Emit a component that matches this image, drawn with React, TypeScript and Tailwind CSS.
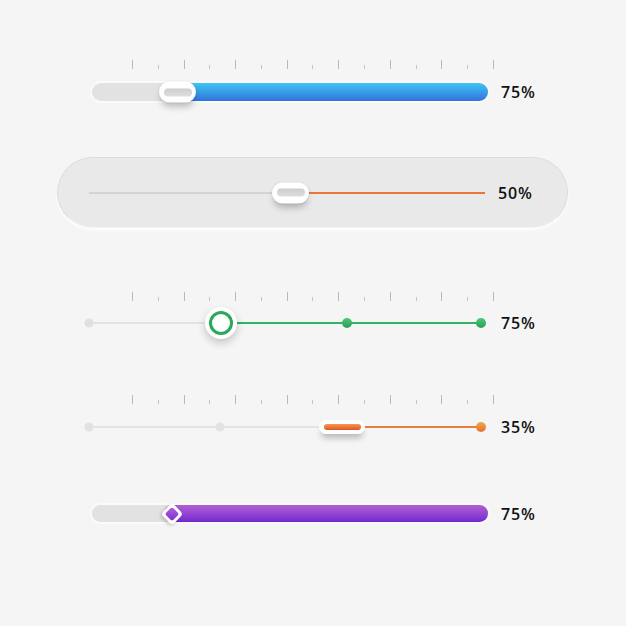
const TICKS = Array.from({ length: 15 }, (_, i) => i % 2 === 0);

function Ticks() {
  return (
    <div className="ml-[132px] flex h-[9px] w-[362px] items-end justify-between">
      {TICKS.map((long, i) => (
        <span
          key={i}
          className={long ? "h-[9px] w-px bg-[#b9b9b9]" : "h-[4px] w-px bg-[#c4c4c4]"}
        />
      ))}
    </div>
  );
}

function Label({ children }: { children: React.ReactNode }) {
  return (
    <span className="font-['Open_Sans',sans-serif] text-[16px] font-semibold leading-none tracking-[0.05em] text-[#111111]">
      {children}
    </span>
  );
}

function PillThumb({ left }: { left: number }) {
  return (
    <div
      className="absolute top-1/2 flex h-[21px] w-[37px] -translate-y-1/2 items-center justify-center rounded-full bg-white shadow-[0_6px_7px_-2px_rgba(0,0,0,0.25),0_0_0_1px_rgba(0,0,0,0.04)]"
      style={{ left }}
    >
      <span className="h-[8px] w-[28px] rounded-full bg-gradient-to-b from-[#cdcdcd] to-[#dedede]" />
    </div>
  );
}

export default function App() {
  return (
    <div className="flex h-[626px] w-[626px] flex-col bg-[#f5f5f5] pt-[60px]">
      {/* blue bar */}
      <Ticks />
      <div className="mt-[14px] flex h-[18px] items-center">
        <div className="relative ml-[92px] h-[18px] w-[396px] rounded-full bg-[#e2e2e2] shadow-[0_0_0_2px_#fafafa]">
          <div className="absolute inset-y-0 left-[90px] right-0 rounded-full bg-gradient-to-b from-[#3fc6f1] to-[#3472dc]" />
          <PillThumb left={67} />
        </div>
        <span className="ml-[13px]">
          <Label>75%</Label>
        </span>
      </div>

      {/* orange line in pill */}
      <div className="ml-[57px] mt-[56px] flex h-[71px] w-[511px] items-center rounded-full border border-[#dcdcdc] border-b-[#f2f2f2] bg-[#e9e9e9] shadow-[0_2px_3px_rgba(255,255,255,0.9)]">
        <div className="relative ml-[31px] h-[2px] w-[396px] bg-[#d3d3d3]">
          <div className="absolute inset-y-0 left-[200px] right-0 bg-[#e8763a]" />
          <PillThumb left={183} />
        </div>
        <span className="ml-[13px]">
          <Label>50%</Label>
        </span>
      </div>

      {/* green stepped */}
      <div className="mt-[64px]">
        <Ticks />
      </div>
      <div className="mt-[6px] flex h-[32px] items-center">
        <div className="relative ml-[89px] h-[2px] w-[392px] bg-[#e2e2e2]">
          <span className="absolute left-0 top-1/2 h-[9px] w-[9px] -translate-x-1/2 -translate-y-1/2 rounded-full bg-[#e0e0e0]" />
          <div className="absolute inset-y-0 left-[132px] right-0 bg-[#34b162]" />
          <span className="absolute left-[258px] top-1/2 h-[10px] w-[10px] -translate-x-1/2 -translate-y-1/2 rounded-full bg-gradient-to-b from-[#4cc87a] to-[#2a9e55]" />
          <span className="absolute left-[392px] top-1/2 h-[10px] w-[10px] -translate-x-1/2 -translate-y-1/2 rounded-full bg-gradient-to-b from-[#4cc87a] to-[#2a9e55]" />
          <div className="absolute left-[132px] top-1/2 flex h-[32px] w-[32px] -translate-x-1/2 -translate-y-1/2 items-center justify-center rounded-full bg-white shadow-[0_4px_8px_rgba(0,0,0,0.2)]">
            <span className="h-[24px] w-[24px] rounded-full border-[3px] border-[#2aa85b] bg-white" />
          </div>
        </div>
        <span className="ml-[20px]">
          <Label>75%</Label>
        </span>
      </div>

      {/* orange stepped */}
      <div className="mt-[56px]">
        <Ticks />
      </div>
      <div className="mt-[16px] flex h-[14px] items-center">
        <div className="relative ml-[89px] h-[2px] w-[392px] bg-[#e4e4e4]">
          <span className="absolute left-0 top-1/2 h-[9px] w-[9px] -translate-x-1/2 -translate-y-1/2 rounded-full bg-[#e2e2e2]" />
          <span className="absolute left-[131px] top-1/2 h-[9px] w-[9px] -translate-x-1/2 -translate-y-1/2 rounded-full bg-[#e2e2e2]" />
          <div className="absolute inset-y-0 left-[253px] right-0 bg-[#e4803e]" />
          <span className="absolute left-[392px] top-1/2 h-[10px] w-[10px] -translate-x-1/2 -translate-y-1/2 rounded-full bg-gradient-to-b from-[#f0a850] to-[#e0702e]" />
          <div className="absolute left-[230px] top-1/2 flex h-[14px] w-[46px] -translate-y-1/2 items-center justify-center rounded-full bg-white shadow-[0_6px_6px_-2px_rgba(0,0,0,0.25)]">
            <span className="h-[6px] w-[37px] rounded-full bg-gradient-to-b from-[#f39a4d] to-[#e0512a]" />
          </div>
        </div>
        <span className="ml-[20px]">
          <Label>35%</Label>
        </span>
      </div>

      {/* purple bar */}
      <div className="mt-[71px] flex h-[17px] items-center">
        <div className="relative ml-[92px] h-[17px] w-[396px] rounded-full bg-[#e2e2e2] shadow-[0_0_0_2px_#fafafa]">
          <div className="absolute inset-y-0 left-[72px] right-0 rounded-full bg-gradient-to-b from-[#b35ed2] to-[#7526cf]" />
          <div className="absolute left-[80px] top-1/2 flex h-[16px] w-[16px] -translate-x-1/2 -translate-y-1/2 rotate-45 items-center justify-center rounded-[4px] bg-white shadow-[0_2px_4px_rgba(0,0,0,0.2)]">
            <span className="h-[10px] w-[10px] rounded-[2px] bg-gradient-to-br from-[#b65dd6] to-[#7a2bd0]" />
          </div>
        </div>
        <span className="ml-[13px]">
          <Label>75%</Label>
        </span>
      </div>
    </div>
  );
}
